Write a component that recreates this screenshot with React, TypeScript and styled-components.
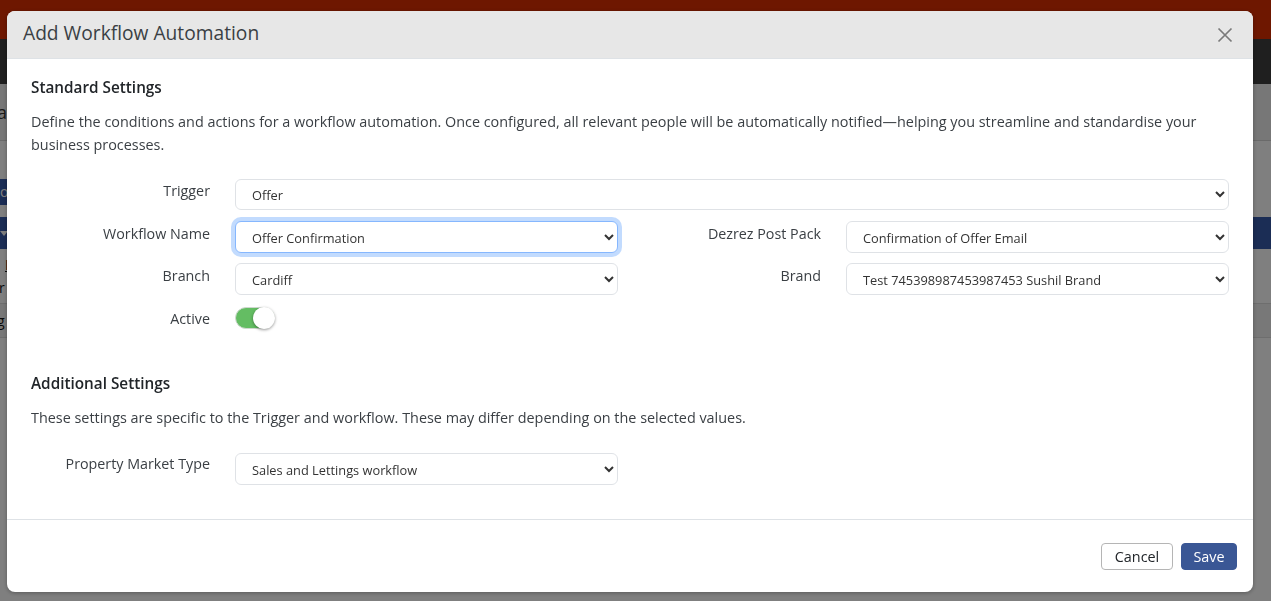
import React from "react"
import styled, { createGlobalStyle } from "styled-components"

const GlobalStyle = createGlobalStyle`
html, body {
    margin: 0;
    height: 100%;
    overflow: hidden;
    background: #fff;
    font-family: "Open Sans", "Liberation Sans", sans-serif;
    color: #212529;
}
* { box-sizing: border-box; }
`

/* page behind the dialog */
const Page = styled.div`
height: 601px;
display: flex;
flex-direction: column;
overflow: hidden;
`
const BrandBar = styled.div`
height: 39px;
background: #dd2e00;
`
const NavBar = styled.div`
height: 45px;
background: #3e3e3e;
`
const PageTitle = styled.div`
height: 57px;
background: #eeeeee;
border-bottom: 1px solid #d4d4d4;
padding: 17px 0 0;
font-size: 18px;
line-height: 22px;
margin-left: -3px;
color: #333;
`
const ActionRow = styled.div`
height: 76px;
padding-top: 38px;
`
const ActionBtn = styled.div`
width: 60px;
height: 26px;
background: #365aaa;
color: #fff;
font-size: 14px;
line-height: 26px;
`
const TableHead = styled.div`
height: 32px;
background: #365aaa;
position: relative;
`
const Caret = styled.span`
position: absolute;
left: 0;
top: 14px;
border-left: 4px solid transparent;
border-right: 4px solid transparent;
border-top: 5px solid #fff;
`
const TableRow = styled.div<{ $line?: boolean; $shade?: boolean; $h: number }>`
height: ${(p) => p.$h}px;
font-size: 14px;
line-height: 20px;
color: #111;
background: ${(p) => (p.$shade ? "#f1f1f1" : "transparent")};
border-bottom: ${(p) => (p.$line ? "1px solid #dcdcdc" : "none")};
padding-left: 4px;
`
const RowText = styled.span<{ $top: number; $left: number }>`
display: block;
padding-top: ${(p) => p.$top}px;
margin-left: ${(p) => p.$left}px;
white-space: nowrap;
`

/* dialog */
const Overlay = styled.div`
position: fixed;
inset: 0;
background: rgba(0, 0, 0, 0.5);
`
const Dialog = styled.div`
position: absolute;
left: 7px;
top: 11px;
width: 1246px;
height: 581px;
background: #fff;
border-radius: 8px;
overflow: hidden;
display: flex;
flex-direction: column;
box-shadow: 0 1px 4px rgba(0, 0, 0, 0.3);
`
const Header = styled.div`
height: 48px;
flex: none;
background: #e7e7e7;
border-bottom: 1px solid #dee2e6;
display: flex;
align-items: center;
justify-content: space-between;
padding: 0 20px 4px 16px;
`
const Title = styled.h5`
margin: 0;
font-size: 19.2px;
font-weight: 400;
line-height: 24px;
color: #3a3f44;
`
const CloseButton = styled.button`
border: 0;
background: none;
padding: 0;
width: 16px;
height: 16px;
display: block;
color: #7a7a7a;
margin-top: 5px;
`
const Body = styled.div`
flex: 1;
padding: 17px 24px 0;
`
const SectionTitle = styled.h6<{ $top?: number }>`
margin: ${(p) => p.$top || 0}px 0 0;
font-size: 15.3px;
font-weight: 600;
line-height: 22px;
color: #212529;
`
const Description = styled.p`
margin: 12px 0 0;
font-size: 14.4px;
line-height: 23px;
color: #3a3f44;
`
const FormGrid = styled.div<{ $top: number }>`
display: grid;
grid-template-columns: 180px 383px 180px 383px;
column-gap: 24px;
row-gap: 10px;
margin-top: ${(p) => p.$top}px;
`
const Label = styled.label<{ $shift?: number }>`
font-size: 14.3px;
line-height: 24px;
margin-top: ${(p) => (p.$shift === undefined ? 1 : p.$shift)}px;
color: #3a3f44;
text-align: right;
padding-right: 1px;
`
const Select = styled.select<{ $wide?: boolean; $focus?: boolean }>`
grid-column: ${(p) => (p.$wide ? "span 3" : "auto")};
height: ${(p) => (p.$wide ? 31 : 32)}px;
margin-bottom: ${(p) => (p.$wide ? 1 : 0)}px;
width: 100%;
padding: 1px 8px 0 12px;
font-family: inherit;
font-size: 12.8px;
color: #333;
background-color: #fff;
border: 1px solid ${(p) => (p.$focus ? "#86b7fe" : "#dfe2e6")};
border-radius: 6px;
outline: none;
box-shadow: ${(p) => (p.$focus ? "0 0 0 4px rgba(13, 110, 253, 0.25)" : "none")};
`
const Toggle = styled.span`
display: block;
width: 40px;
height: 22px;
margin: 2px 0 1px;
border-radius: 11px;
background: #64bd63;
border: 1px solid #cfd8cf;
position: relative;
`
const Knob = styled.span`
position: absolute;
right: -1px;
top: -1px;
width: 22px;
height: 22px;
border-radius: 50%;
background: #fff;
box-shadow: 0 1px 3px rgba(0, 0, 0, 0.4);
`
const Footer = styled.div`
height: 73px;
flex: none;
border-top: 1px solid #dee2e6;
display: flex;
justify-content: flex-end;
align-items: flex-start;
gap: 8px;
padding: 23px 16px 0;
`
const Button = styled.button<{ $primary?: boolean }>`
height: 27px;
width: ${(p) => (p.$primary ? 56 : 72)}px;
padding: 0;
font-family: inherit;
font-size: 14.4px;
border-radius: 4px;
border: 1px solid ${(p) => (p.$primary ? "#3a5795" : "#b5b5b5")};
background: ${(p) => (p.$primary ? "#3a5795" : "#fff")};
color: ${(p) => (p.$primary ? "#fff" : "#212529")};
`

function App() {
    return (
        <>
            <GlobalStyle />
            <Page>
                <BrandBar />
                <NavBar />
                <PageTitle>ation</PageTitle>
                <ActionRow>
                    <ActionBtn>o</ActionBtn>
                </ActionRow>
                <TableHead><Caret /></TableHead>
                <TableRow $h={22}><RowText $top={6} $left={1}><u>D</u></RowText></TableRow>
                <TableRow $h={33} $line><RowText $top={7} $left={-5}>r</RowText></TableRow>
                <TableRow $h={34} $line $shade><RowText $top={7} $left={-7}>g</RowText></TableRow>
            </Page>
            <Overlay>
                <Dialog>
                    <Header>
                        <Title>Add Workflow Automation</Title>
                        <CloseButton aria-label="Close">
                            <svg width="16" height="16" viewBox="0 0 16 16" fill="none" stroke="currentColor" strokeWidth="1.7">
                                <path d="M1.5 1.5l13 13M14.5 1.5l-13 13" />
                            </svg>
                        </CloseButton>
                    </Header>
                    <Body>
                        <SectionTitle>Standard Settings</SectionTitle>
                        <Description>
                            Define the conditions and actions for a workflow automation. Once configured, all relevant people will be automatically notified—helping you streamline and standardise your business processes.
                        </Description>
                        <FormGrid $top={23}>
                            <Label $shift={0}>Trigger</Label>
                            <Select $wide defaultValue="Offer"><option>Offer</option></Select>
                            <Label>Workflow Name</Label>
                            <Select $focus defaultValue="Offer Confirmation"><option>Offer Confirmation</option></Select>
                            <Label>Dezrez Post Pack</Label>
                            <Select defaultValue="Confirmation of Offer Email"><option>Confirmation of Offer Email</option></Select>
                            <Label>Branch</Label>
                            <Select defaultValue="Cardiff"><option>Cardiff</option></Select>
                            <Label>Brand</Label>
                            <Select><option>Test 745398987453987453 Sushil Brand</option></Select>
                            <Label $shift={2}>Active</Label>
                            <Toggle><Knob /></Toggle>
                        </FormGrid>
                        <SectionTitle $top={41}>Additional Settings</SectionTitle>
                        <Description>
                            These settings are specific to the Trigger and workflow. These may differ depending on the selected values.
                        </Description>
                        <FormGrid $top={24}>
                            <Label $shift={-1}>Property Market Type</Label>
                            <Select><option>Sales and Lettings workflow</option></Select>
                        </FormGrid>
                    </Body>
                    <Footer>
                        <Button>Cancel</Button>
                        <Button $primary>Save</Button>
                    </Footer>
                </Dialog>
            </Overlay>
        </>
    )
}

export default App
